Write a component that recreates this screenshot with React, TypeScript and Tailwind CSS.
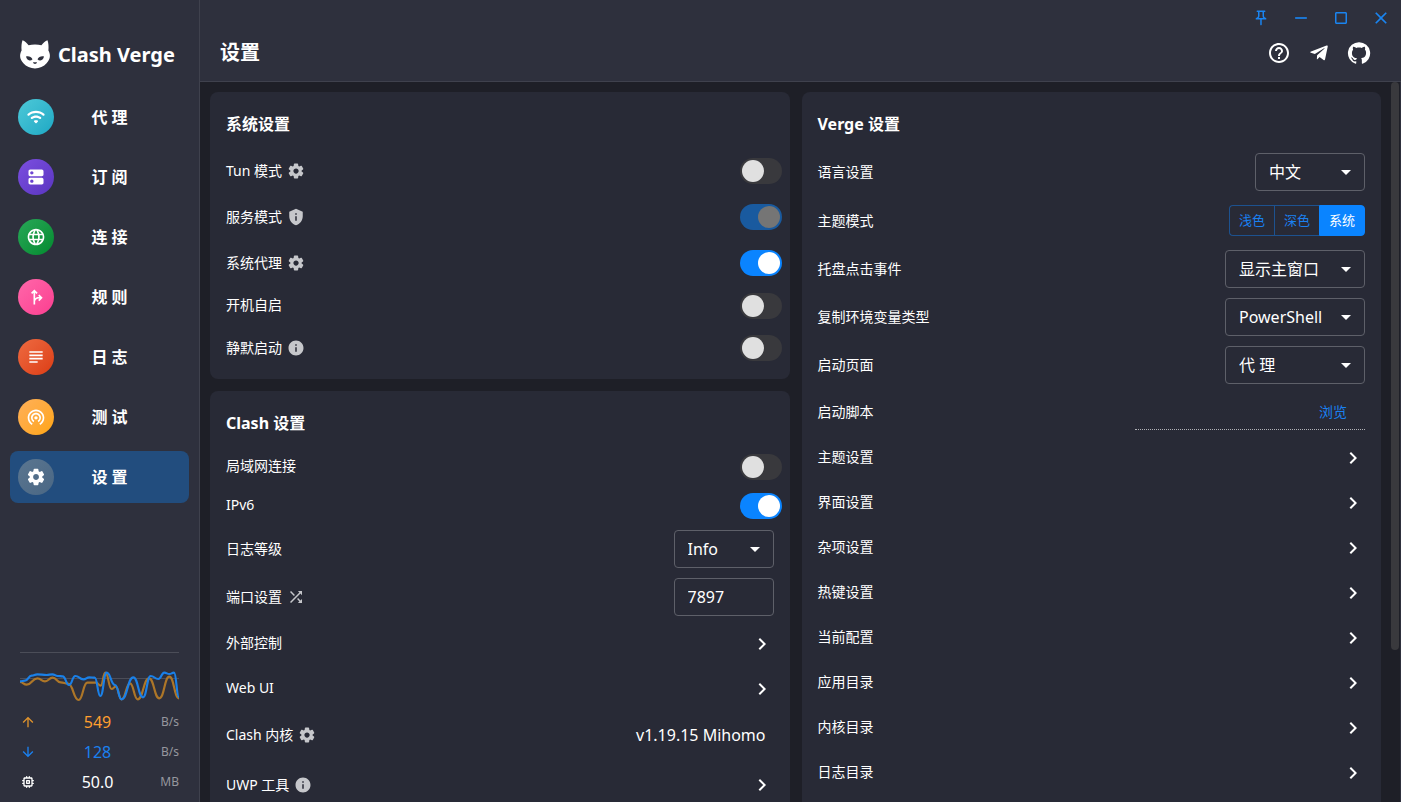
import type { ReactNode } from "react";
import {
  MdArrowDropDown,
  MdArrowDownward,
  MdArrowUpward,
  MdChevronRight,
  MdClose,
  MdCropSquare,
  MdForkRight,
  MdHelpOutline,
  MdInfo,
  MdLanguage,
  MdOutlinePushPin,
  MdPrivacyTip,
  MdRemove,
  MdShuffle,
  MdSubject,
  MdWifiTethering,
} from "react-icons/md";
import { FaTelegramPlane } from "react-icons/fa";

type IconProps = { className?: string };

function PathIcon({ d, className }: { d: string; className?: string }) {
  return (
    <svg viewBox="0 0 24 24" fill="currentColor" className={className} aria-hidden="true">
      <path d={d} />
    </svg>
  );
}

const WifiIcon = (p: IconProps) => (
  <PathIcon
    {...p}
    d="M2.06 10.06c.51.51 1.32.56 1.87.1 4.67-3.84 11.45-3.84 16.13-.01.56.46 1.38.42 1.89-.09.59-.59.55-1.57-.1-2.1-5.71-4.67-13.97-4.67-19.69 0-.65.52-.7 1.5-.1 2.1zm7.76 7.76l1.47 1.47c.39.39 1.02.39 1.41 0l1.47-1.47c.47-.47.37-1.28-.23-1.59-1.22-.63-2.68-.63-3.91 0-.57.31-.68 1.12-.21 1.59zm-3.73-3.73c.49.49 1.26.54 1.83.13 2.44-1.73 5.72-1.73 8.16 0 .57.4 1.34.36 1.83-.13l.01-.01c.6-.6.56-1.62-.13-2.11-3.44-2.49-8.13-2.49-11.58 0-.69.5-.73 1.51-.12 2.12z"
  />
);

const ServerIcon = (p: IconProps) => (
  <PathIcon
    {...p}
    d="M19 13H5c-1.1 0-2 .9-2 2v4c0 1.1.9 2 2 2h14c1.1 0 2-.9 2-2v-4c0-1.1-.9-2-2-2zM7 19c-1.100 0-2-.9-2-2s.9-2 2-2 2 .9 2 2-.9 2-2 2zM19 3H5c-1.100 0-2 .9-2 2v4c0 1.1.9 2 2 2h14c1.1 0 2-.9 2-2V5c0-1.100-.9-2-2-2zM7 9c-1.100 0-2-.9-2-2s.9-2 2-2 2 .9 2 2-.9 2-2 2z"
  />
);

const ChipIcon = (p: IconProps) => (
  <PathIcon
    {...p}
    d="M14 9h-4c-.55 0-1 .45-1 1v4c0 .55.45 1 1 1h4c.55 0 1-.45 1-1v-4c0-.55-.45-1-1-1zm-1 4h-2v-2h2v2zm8-3c0-.55-.45-1-1-1h-1V7c0-1.1-.9-2-2-2h-2V4c0-.55-.45-1-1-1s-1 .45-1 1v1h-2V4c0-.55-.45-1-1-1s-1 .45-1 1v1H7c-1.1 0-2 .9-2 2v2H4c-.55 0-1 .45-1 1s.45 1 1 1h1v2H4c-.55 0-1 .45-1 1s.45 1 1 1h1v2c0 1.1.9 2 2 2h2v1c0 .55.45 1 1 1s1-.45 1-1v-1h2v1c0 .55.45 1 1 1s1-.45 1-1v-1h2c1.1 0 2-.9 2-2v-2h1c.55 0 1-.45 1-1s-.45-1-1-1h-1v-2h1c.55 0 1-.45 1-1zm-5 7H8c-.55 0-1-.45-1-1V8c0-.55.45-1 1-1h8c.55 0 1 .45 1 1v8c0 .55-.45 1-1 1z"
  />
);

const GearIcon = (p: IconProps) => (
  <PathIcon
    {...p}
    d="M19.5 12c0-.23-.01-.45-.03-.68l1.86-1.41c.4-.3.51-.86.26-1.3l-1.87-3.23c-.25-.44-.79-.62-1.25-.42l-2.15.91c-.37-.26-.76-.49-1.17-.68l-.29-2.31C14.8 2.38 14.37 2 13.87 2h-3.73c-.51 0-.94.38-1 .88l-.29 2.31c-.41.19-.8.42-1.17.68l-2.15-.91c-.46-.2-1-.02-1.25.42L2.41 8.62c-.25.44-.14.99.26 1.3l1.86 1.41C4.51 11.55 4.5 11.77 4.5 12s.01.45.03.68l-1.86 1.41c-.4.3-.51.86-.26 1.3l1.87 3.23c.25.44.79.62 1.25.42l2.15-.91c.37.26.76.49 1.17.68l.29 2.31c.06.5.49.88.99.88h3.73c.5 0 .93-.38.99-.88l.29-2.31c.41-.19.8-.42 1.17-.68l2.15.91c.46.2 1 .02 1.25-.42l1.87-3.23c.25-.44.14-.99-.26-1.3l-1.86-1.41c.03-.23.04-.45.04-.68zm-7.46 3.5c-1.93 0-3.5-1.57-3.5-3.5s1.57-3.5 3.5-3.5 3.5 1.57 3.5 3.5-1.57 3.5-3.5 3.5z"
  />
);

const GitHubIcon = (p: IconProps) => (
  <PathIcon
    {...p}
    d="M12 1.27a11 11 0 00-3.48 21.46c.55.09.73-.28.73-.55v-1.84c-3.03.64-3.67-1.46-3.67-1.46-.55-1.29-1.28-1.65-1.28-1.65-.92-.65.1-.65.1-.65 1.1 0 1.73 1.1 1.73 1.1.92 1.65 2.57 1.2 3.21.92a2 2 0 01.64-1.47c-2.47-.27-5.04-1.19-5.04-5.5 0-1.1.46-2.1 1.2-2.84a3.76 3.76 0 010-2.93s.91-.28 3.11 1.1c1.8-.49 3.7-.49 5.5 0 2.1-1.38 3.02-1.1 3.02-1.1a3.76 3.76 0 01.1 2.93c.83.74 1.2 1.74 1.2 2.94 0 4.21-2.57 5.13-5.04 5.4.45.37.82.92.82 2.02v3.03c0 .27.1.64.73.55A11 11 0 0012 1.27"
  />
);

function CatLogo() {
  return (
    <svg viewBox="0 0 30 29" className="h-[29px] w-[30px]" aria-hidden="true">
      <path
        fill="#fff"
        d="M2.5.2C4.8.8 7 3 8.600 5.300 10.500 4.800 12.600 4.600 15 4.600s4.500.2 6.400.7C23 3 25.200.8 27.500.2c1 2.800 1.300 6.500.9 10.300 1 1.700 1.500 3.600 1.500 5.600 0 2.700-1.300 5-3.300 7.200C23.800 26.600 19.500 28.400 15 28.400S6.200 26.600 3.400 23.300C1.400 21.100.1 18.800.1 16.100c0-2 .5-3.900 1.500-5.600C1.200 6.700 1.500 3 2.500.2z"
      />
      <g fill="#2e303d">
        <path d="M6 16.500c2.500-.7 5.500.3 6.500 2.800-.7.9-1.800 1.300-2.900 1.200C7.700 20.300 6.500 18.600 6 16.500z" />
        <path d="M24 16.500c-2.500-.7-5.500.3-6.500 2.800.7.9 1.800 1.300 2.900 1.200 1.900-.2 3.100-1.900 3.600-4z" />
        <path d="M13 22.200h4c-.2 1-1.100 1.700-2 1.700s-1.800-.7-2-1.700z" />
      </g>
    </svg>
  );
}

const navItems = [
  { label: "代 理", Icon: WifiIcon, bg: "bg-linear-135 from-[#4cc9d8] to-[#1ba8c4]" },
  { label: "订 阅", Icon: ServerIcon, bg: "bg-linear-135 from-[#7c4fe0] to-[#5a35c0]" },
  { label: "连 接", Icon: MdLanguage, bg: "bg-linear-135 from-[#27a858] to-[#008a2e]" },
  { label: "规 则", Icon: MdForkRight, bg: "bg-linear-135 from-[#ff66aa] to-[#fb3d90]" },
  { label: "日 志", Icon: MdSubject, bg: "bg-linear-135 from-[#ee6a40] to-[#dc3c12]" },
  { label: "测 试", Icon: MdWifiTethering, bg: "bg-linear-135 from-[#ffb057] to-[#ffa500]" },
  { label: "设 置", Icon: GearIcon, bg: "bg-linear-135 from-[#5b7690] to-[#4a6784]", active: true },
];

type Point = [number, number];

const downTrace: Point[] = [
  [60, 124], [75, 122], [95, 107], [112, 103], [140, 105], [157, 103], [173, 108], [188, 109],
  [207, 135], [226, 108], [250, 118], [268, 112], [284, 113], [301, 168], [320, 98], [345, 135],
  [365, 178], [400, 112], [429, 172], [452, 108], [475, 117], [493, 98], [508, 102], [522, 98], [537, 172],
];

const upTrace: Point[] = [
  [60, 126], [80, 134], [112, 115], [135, 124], [158, 113], [182, 127], [204, 131], [236, 180],
  [262, 128], [288, 128], [302, 137], [316, 98], [335, 147], [347, 140], [365, 178], [390, 130],
  [413, 178], [447, 115], [478, 175], [508, 110], [537, 175],
];

function smooth(points: Point[]) {
  return points
    .map(([x, y], i) => {
      if (i === 0) return `M${x} ${y}`;
      const [px, py] = points[i - 1];
      const mid = (px + x) / 2;
      return `C${mid} ${py} ${mid} ${y} ${x} ${y}`;
    })
    .join("");
}

function TrafficGraph() {
  return (
    <svg viewBox="60 84 477 105" className="h-[35px] w-full" aria-hidden="true">
      <path d="M60 115.500H537" stroke="#4b4d58" strokeWidth="3" />
      <g fill="none" strokeWidth="6.500" strokeLinejoin="round">
        <path d={smooth(upTrace)} stroke="#ad7628" />
        <path d={smooth(downTrace)} stroke="#1a80e8" />
      </g>
    </svg>
  );
}

function Stat({ icon, value, unit, color }: { icon: ReactNode; value: string; unit: string; color: string }) {
  return (
    <div className={`flex h-[30px] items-center ${color}`}>
      <span className="flex w-4 justify-center">{icon}</span>
      <span className="flex-1 text-center text-base">{value}</span>
      <span className="w-5 text-right text-xs text-[#96979e]">{unit}</span>
    </div>
  );
}

function Sidebar() {
  return (
    <aside className="flex w-[200px] shrink-0 flex-col border-r border-[#3f414d] bg-[#2e303d]">
      <div className="flex h-[91px] items-center gap-2 pt-[18px] pl-5">
        <CatLogo />
        <span className="text-xl leading-7 font-bold whitespace-nowrap">Clash Verge</span>
      </div>
      <nav className="flex flex-col gap-2 px-[10px]">
        {navItems.map(({ label, Icon, bg, active }) => (
          <a
            key={label}
            href="#"
            aria-current={active ? "page" : undefined}
            className={`flex h-[52px] items-center rounded-lg pr-6 pl-2 ${active ? "bg-[#224d7e]" : ""}`}
          >
            <span className={`flex size-9 items-center justify-center rounded-full ${bg}`}>
              <Icon className="size-5" />
            </span>
            <span className="flex-1 text-center text-base font-bold">{label}</span>
          </a>
        ))}
      </nav>
      <div className="mx-5 mt-auto mb-[5px] border-t border-[#4b4d58] pt-[15px]">
        <TrafficGraph />
        <div className="mt-1">
          <Stat icon={<MdArrowUpward className="size-4 text-[#e0932c]" />} value="549" unit="B/s" color="text-[#ff9f2f]" />
          <Stat icon={<MdArrowDownward className="size-4" />} value="128" unit="B/s" color="text-[#1a80f0]" />
          <Stat icon={<ChipIcon className="size-4" />} value="50.0" unit="MB" color="text-white" />
        </div>
      </div>
    </aside>
  );
}

function IconButton({ label, children }: { label: string; children: ReactNode }) {
  return (
    <button type="button" aria-label={label} className="flex w-10 items-center justify-center">
      {children}
    </button>
  );
}

function Header() {
  return (
    <header className="flex h-[82px] shrink-0 flex-col border-b border-[#3f414d] bg-[#2e303d]">
      <div className="flex h-9 justify-end text-[#1a84f0]">
        <IconButton label="置顶">
          <MdOutlinePushPin className="size-[18px]" />
        </IconButton>
        <IconButton label="最小化">
          <MdRemove className="size-5" />
        </IconButton>
        <IconButton label="最大化">
          <MdCropSquare className="size-[18px]" />
        </IconButton>
        <IconButton label="关闭">
          <MdClose className="size-5" />
        </IconButton>
      </div>
      <div className="flex h-[34px] items-center justify-between pr-[22px] pl-5">
        <h1 className="text-xl font-bold">设置</h1>
        <div className="flex">
          <IconButton label="手册">
            <MdHelpOutline className="size-6" />
          </IconButton>
          <IconButton label="Telegram">
            <FaTelegramPlane className="size-5" />
          </IconButton>
          <IconButton label="GitHub">
            <GitHubIcon className="size-6" />
          </IconButton>
        </div>
      </div>
    </header>
  );
}

function Card({ title, children }: { title: string; children: ReactNode }) {
  return (
    <section className="rounded-lg bg-[#282a36] px-4 py-2">
      <h2 className="flex h-12 items-center text-base font-bold">{title}</h2>
      {children}
    </section>
  );
}

type RowSize = "compact" | "link" | "switch" | "field" | "group" | "tall";

const rowHeights: Record<RowSize, string> = {
  compact: "h-[39px]",
  link: "h-[45px]",
  switch: "h-[46px]",
  field: "h-12",
  group: "h-[49px]",
  tall: "h-[52px]",
};

function Row({
  label,
  htmlFor,
  size,
  extra,
  children,
}: {
  label: string;
  htmlFor?: string;
  size: RowSize;
  extra?: ReactNode;
  children?: ReactNode;
}) {
  const raised = size === "compact" || size === "link";
  return (
    <div className={`flex items-center justify-between ${rowHeights[size]}`}>
      <div className={`flex items-center gap-[5px] ${raised ? "pb-[2px]" : ""}`}>
        {htmlFor ? (
          <label htmlFor={htmlFor} className="text-sm">
            {label}
          </label>
        ) : (
          <span className="text-sm">{label}</span>
        )}
        {extra && <span className="text-[#c6c7cb]">{extra}</span>}
      </div>
      {children}
    </div>
  );
}

function Switch({ id, checked, disabled }: { id: string; checked?: boolean; disabled?: boolean }) {
  return (
    <input
      id={id}
      type="checkbox"
      role="switch"
      defaultChecked={checked}
      disabled={disabled}
      className="-mr-2 h-[26px] w-[42px] appearance-none rounded-full bg-[#39393d] p-[2px] before:block before:size-[22px] before:rounded-full before:bg-[#e0e0e0] checked:bg-[#0a84ff] checked:before:translate-x-4 checked:before:bg-white disabled:bg-[#195a9f] disabled:before:bg-[#757575]"
    />
  );
}

function SelectBox({ id, width, options }: { id: string; width: string; options: string[] }) {
  return (
    <div className={`relative ${width}`}>
      <select
        id={id}
        className="h-[38px] w-full appearance-none rounded-sm border border-[#5e6069] bg-transparent pr-8 pl-[13px] text-base"
      >
        {options.map((o) => (
          <option key={o}>{o}</option>
        ))}
      </select>
      <MdArrowDropDown className="pointer-events-none absolute top-[7px] right-[7px] size-6" />
    </div>
  );
}

function LinkRow({ label, extra, size = "link" }: { label: string; extra?: ReactNode; size?: RowSize }) {
  return (
    <a href="#" className="block">
      <Row label={label} size={size} extra={extra}>
        <MdChevronRight className="size-6" />
      </Row>
    </a>
  );
}

const gear = <GearIcon className="size-[18px]" />;
const info = <MdInfo className="size-[18px]" />;

const themes = [
  { label: "浅色", shape: "rounded-l-sm border-r-0" },
  { label: "深色", shape: "border-r-0" },
  { label: "系统", shape: "rounded-r-sm", active: true },
];

const vergeLinks = ["主题设置", "界面设置", "杂项设置", "热键设置", "当前配置", "应用目录", "内核目录", "日志目录"];

function SystemCard() {
  return (
    <Card title="系统设置">
      <Row label="Tun 模式" htmlFor="tun" size="switch" extra={gear}>
        <Switch id="tun" />
      </Row>
      <Row label="服务模式" htmlFor="service" size="switch" extra={<MdPrivacyTip className="size-[18px]" />}>
        <Switch id="service" checked disabled />
      </Row>
      <Row label="系统代理" htmlFor="proxy" size="switch" extra={gear}>
        <Switch id="proxy" checked />
      </Row>
      <Row label="开机自启" htmlFor="autostart" size="compact">
        <Switch id="autostart" />
      </Row>
      <Row label="静默启动" htmlFor="silent" size="switch" extra={info}>
        <Switch id="silent" />
      </Row>
    </Card>
  );
}

function ClashCard() {
  return (
    <Card title="Clash 设置">
      <Row label="局域网连接" htmlFor="lan" size="compact">
        <Switch id="lan" />
      </Row>
      <Row label="IPv6" htmlFor="ipv6" size="compact">
        <Switch id="ipv6" checked />
      </Row>
      <Row label="日志等级" htmlFor="level" size="field">
        <SelectBox id="level" width="w-[100px]" options={["Info"]} />
      </Row>
      <Row label="端口设置" htmlFor="port" size="field" extra={<MdShuffle className="size-[18px]" />}>
        <input
          id="port"
          type="text"
          defaultValue="7897"
          className="h-[38px] w-[100px] rounded-sm border border-[#5e6069] bg-transparent px-[13px] text-base"
        />
      </Row>
      <LinkRow label="外部控制" />
      <LinkRow label="Web UI" />
      <Row label="Clash 内核" size="field" extra={gear}>
        <span className="pr-2 text-base">v1.19.15 Mihomo</span>
      </Row>
      <LinkRow label="UWP 工具" size="tall" extra={info} />
    </Card>
  );
}

function VergeCard() {
  return (
    <Card title="Verge 设置">
      <Row label="语言设置" htmlFor="language" size="field">
        <SelectBox id="language" width="w-[110px]" options={["中文"]} />
      </Row>
      <Row label="主题模式" size="group">
        <div role="group" aria-label="主题模式" className="flex">
          {themes.map(({ label, shape, active }) => (
            <button
              key={label}
              type="button"
              aria-pressed={!!active}
              className={`h-[31px] border px-2 text-[13px] ${shape} ${
                active ? "border-[#0a84ff] bg-[#0a84ff]" : "border-[#1d528f] text-[#1a80f0]"
              }`}
            >
              <span className="block w-7">{label}</span>
            </button>
          ))}
        </div>
      </Row>
      <Row label="托盘点击事件" htmlFor="tray" size="field">
        <SelectBox id="tray" width="w-[140px]" options={["显示主窗口"]} />
      </Row>
      <Row label="复制环境变量类型" htmlFor="env" size="field">
        <SelectBox id="env" width="w-[140px]" options={["PowerShell"]} />
      </Row>
      <Row label="启动页面" htmlFor="start" size="field">
        <SelectBox id="start" width="w-[140px]" options={["代 理"]} />
      </Row>
      <Row label="启动脚本" htmlFor="script" size="switch">
        <div className="flex h-9 w-[230px] items-center border-b border-dotted border-[#b0b1b6] pr-[18px]">
          <input id="script" type="text" disabled className="min-w-0 flex-1 bg-transparent" />
          <button type="button" className="text-sm text-[#1a80f0]">
            浏览
          </button>
        </div>
      </Row>
      {vergeLinks.map((label) => (
        <LinkRow key={label} label={label} />
      ))}
    </Card>
  );
}

export default function App() {
  return (
    <div className="flex h-screen overflow-hidden bg-[#1e1f27] font-['Noto_Sans','Noto_Sans_CJK_SC',sans-serif] text-white">
      <Sidebar />
      <div className="flex min-w-0 flex-1 flex-col">
        <Header />
        <main className="flex min-h-0 flex-1 gap-[10px] overflow-hidden border-r border-[#2e303d] pr-px pl-[10px]">
          <div className="grid flex-1 grid-cols-2 gap-3 pt-[10px]">
            <div className="flex flex-col gap-3">
              <SystemCard />
              <ClashCard />
            </div>
            <VergeCard />
          </div>
          <div className="h-[568px] w-2 rounded-full bg-[#39393d]" />
        </main>
      </div>
    </div>
  );
}
